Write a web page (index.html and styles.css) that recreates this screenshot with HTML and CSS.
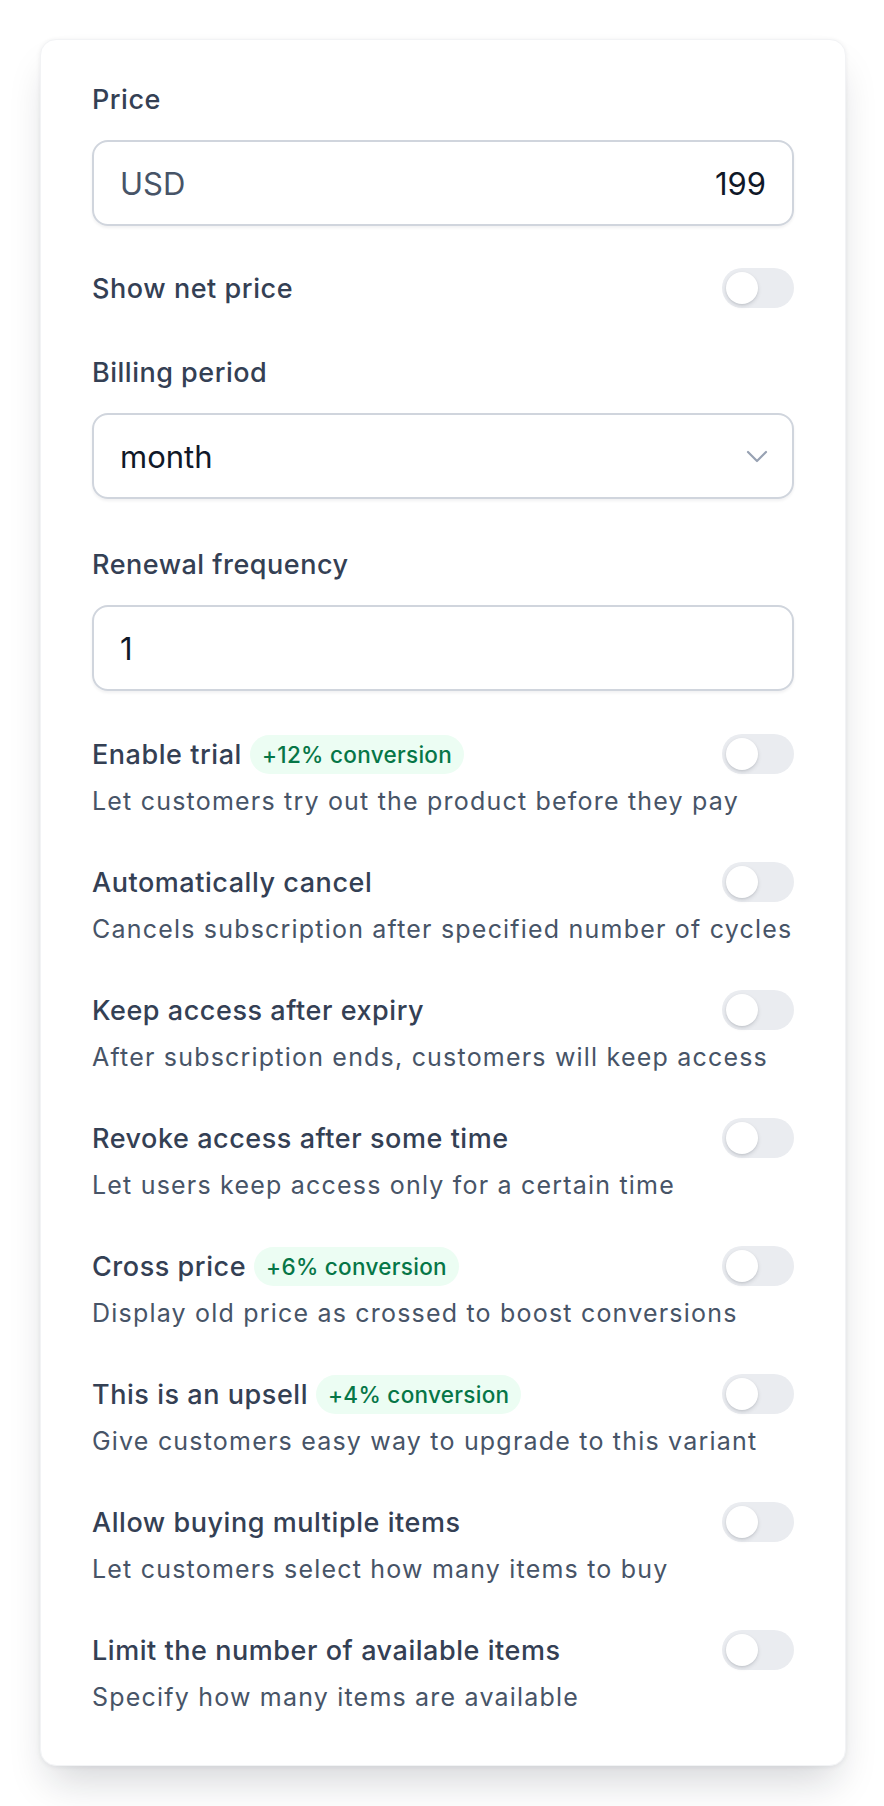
FILE: index.html
```html
<!DOCTYPE html>
<html lang="en">
<head>
<meta charset="utf-8">
<title>Variant pricing</title>
<link rel="stylesheet" href="styles.css">
</head>
<body>
<div class="page">
  <div class="card">
    <div class="field">
      <label class="label">Price</label>
      <div class="input input-price">
        <span class="currency">USD</span>
        <span class="value">199</span>
      </div>
    </div>

    <div class="switch-row simple">
      <span class="title">Show net price</span>
      <span class="toggle"><span class="knob"></span></span>
    </div>

    <div class="field">
      <label class="label">Billing period</label>
      <div class="input input-select">
        <span class="value">month</span>
        <svg class="chevron" width="22" height="13" viewBox="0 0 22 13" fill="none"><path d="M2 2l9 9 9-9" stroke="#98a2b3" stroke-width="2.2" stroke-linecap="round" stroke-linejoin="round"/></svg>
      </div>
    </div>

    <div class="field field-spaced">
      <label class="label">Renewal frequency</label>
      <div class="input">
        <span class="value">1</span>
      </div>
    </div>

    <div class="options">
      <div class="option">
        <div class="switch-row">
          <span class="title">Enable trial <span class="badge">+12% conversion</span></span>
          <span class="toggle"><span class="knob"></span></span>
        </div>
        <p class="desc">Let customers try out the product before they pay</p>
      </div>
      <div class="option">
        <div class="switch-row">
          <span class="title">Automatically cancel</span>
          <span class="toggle"><span class="knob"></span></span>
        </div>
        <p class="desc">Cancels subscription after specified number of cycles</p>
      </div>
      <div class="option">
        <div class="switch-row">
          <span class="title">Keep access after expiry</span>
          <span class="toggle"><span class="knob"></span></span>
        </div>
        <p class="desc">After subscription ends, customers will keep access</p>
      </div>
      <div class="option">
        <div class="switch-row">
          <span class="title">Revoke access after some time</span>
          <span class="toggle"><span class="knob"></span></span>
        </div>
        <p class="desc">Let users keep access only for a certain time</p>
      </div>
      <div class="option">
        <div class="switch-row">
          <span class="title">Cross price <span class="badge">+6% conversion</span></span>
          <span class="toggle"><span class="knob"></span></span>
        </div>
        <p class="desc">Display old price as crossed to boost conversions</p>
      </div>
      <div class="option">
        <div class="switch-row">
          <span class="title">This is an upsell <span class="badge">+4% conversion</span></span>
          <span class="toggle"><span class="knob"></span></span>
        </div>
        <p class="desc">Give customers easy way to upgrade to this variant</p>
      </div>
      <div class="option">
        <div class="switch-row">
          <span class="title">Allow buying multiple items</span>
          <span class="toggle"><span class="knob"></span></span>
        </div>
        <p class="desc">Let customers select how many items to buy</p>
      </div>
      <div class="option">
        <div class="switch-row">
          <span class="title">Limit the number of available items</span>
          <span class="toggle"><span class="knob"></span></span>
        </div>
        <p class="desc">Specify how many items are available</p>
      </div>
    </div>
  </div>
</div>
</body>
</html>
```

FILE: styles.css
```css
* { box-sizing: border-box; }

html, body {
  margin: 0;
  background: #ffffff;
}

body {
  font-family: Inter, "Noto Sans", "Liberation Sans", sans-serif;
  color: #344054;
}

.page {
  padding: 39px 38px 42px 40px;
}

.card {
  background: #ffffff;
  border: 1px solid #f2f3f5;
  border-radius: 16px;
  padding: 44px 51px 50px 51px;
  box-shadow: 0 1px 5px rgba(16, 24, 40, 0.07), 0 24px 40px -10px rgba(16, 24, 40, 0.18);
}

.field {
  display: flex;
  flex-direction: column;
  gap: 24px;
}

.field-spaced {
  margin-top: 50px;
}

.label {
  font-size: 27px;
  line-height: 32px;
  font-weight: 500;
  letter-spacing: 0.5px;
  color: #344054;
}

.input {
  height: 86px;
  border: 2px solid #d0d5dd;
  border-radius: 16px;
  padding: 0 26px;
  display: flex;
  align-items: center;
  font-size: 31px;
  color: #101828;
  box-shadow: 0 2px 3px rgba(16, 24, 40, 0.06);
}

.input-price {
  justify-content: space-between;
}

.currency {
  color: #475467;
}

.input-select {
  justify-content: space-between;
  padding-right: 24px;
}

.chevron {
  display: block;
}

.switch-row {
  display: flex;
  align-items: center;
  justify-content: space-between;
  height: 40px;
}

.switch-row.simple {
  margin: 42px 0 49px;
}

.title {
  display: flex;
  align-items: center;
  gap: 8px;
  font-size: 27px;
  font-weight: 500;
  letter-spacing: 0.55px;
  color: #344054;
}

.badge {
  display: inline-flex;
  align-items: center;
  height: 39px;
  padding: 0 12px;
  border-radius: 20px;
  background: #ecfdf3;
  color: #067647;
  font-size: 22.5px;
  letter-spacing: 0.3px;
  font-weight: 500;
}

.toggle {
  position: relative;
  flex: none;
  width: 72px;
  height: 40px;
  border-radius: 20px;
  background: #eaecf0;
}

.knob {
  position: absolute;
  left: 4px;
  top: 4px;
  width: 32px;
  height: 32px;
  border-radius: 50%;
  background: #ffffff;
  box-shadow: 0 2px 4px rgba(16, 24, 40, 0.12), 0 1px 2px rgba(16, 24, 40, 0.08);
}

.options {
  margin-top: 43px;
  display: flex;
  flex-direction: column;
  gap: 43px;
}

.desc {
  margin: 9px 0 0;
  font-size: 25px;
  line-height: 36px;
  letter-spacing: 1.2px;
  color: #475467;
}
```
